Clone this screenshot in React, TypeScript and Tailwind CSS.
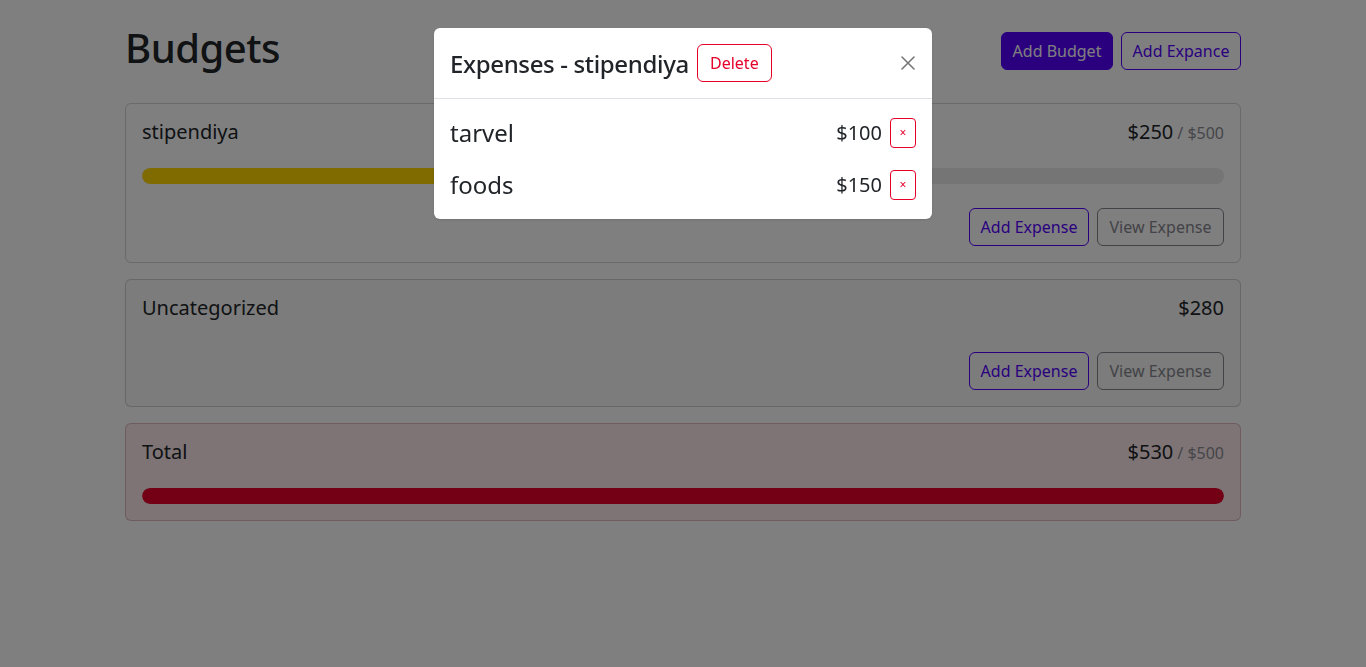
import React from "react";

function Btn({ kind, w, children }: { kind: "primary" | "outline" | "secondary" | "danger"; w: string; children: React.ReactNode }) {
  const base = "h-[38px] flex items-center justify-center rounded-md border text-[16px] leading-[24px] whitespace-nowrap";
  const cls =
    kind === "primary"
      ? "bg-[#5400ff] border-[#5400ff] text-white"
      : kind === "outline"
      ? "border-[#5400ff] text-[#5400ff] bg-transparent"
      : kind === "secondary"
      ? "border-[#85858e] text-[#85858e] bg-transparent"
      : "border-[#e6002a] text-[#e6002a] bg-transparent";
  return <button className={`${base} ${cls} ${w}`}>{children}</button>;
}

function Bar({ pct, color }: { pct: number; color: string }) {
  return (
    <div className="h-4 w-full rounded-full bg-[#eaeaec] overflow-hidden">
      <div className={`h-full rounded-full ${color}`} style={{ width: `${Math.min(pct, 100)}%` }} />
    </div>
  );
}

export default function App() {
  return (
    <div className="relative min-h-screen bg-white text-[#212529] font-['Noto_Sans',sans-serif]">
      <div className="mx-auto w-[1140px] px-3 pt-6">
        <div className="flex items-start gap-2 h-[48px] mb-[31px]">
          <h1 className="mr-auto text-[40px] leading-[48px] font-medium tracking-[-0.5px]">Budgets</h1>
          <div className="mt-2 flex gap-2">
            <Btn kind="primary" w="w-[112px]">Add Budget</Btn>
            <Btn kind="outline" w="w-[120px]">Add Expance</Btn>
          </div>
        </div>

        <div className="flex flex-col gap-[16px]">
          <div className="rounded-md border border-black/[0.17] p-4">
            <div className="flex items-baseline justify-between h-[24px] mb-6">
              <div className="text-[20px] leading-[24px]">stipendiya</div>
              <div className="flex items-baseline">
                <span className="text-[20px] leading-[24px]">$250</span>
                <span className="ml-1 text-[16px] text-[#8c8c94]">/ $500</span>
              </div>
            </div>
            <Bar pct={50} color="bg-[#ffd600]" />
            <div className="mt-6 flex justify-end gap-2">
              <Btn kind="outline" w="w-[120px]">Add Expense</Btn>
              <Btn kind="secondary" w="w-[127px]">View Expense</Btn>
            </div>
          </div>

          <div className="rounded-md border border-black/[0.17] bg-[#f7f8f7] p-4">
            <div className="flex items-baseline justify-between h-[24px] mb-8">
              <div className="text-[20px] leading-[24px]">Uncategorized</div>
              <div className="text-[20px] leading-[24px]">$280</div>
            </div>
            <div className="flex justify-end gap-2">
              <Btn kind="outline" w="w-[120px]">Add Expense</Btn>
              <Btn kind="secondary" w="w-[127px]">View Expense</Btn>
            </div>
          </div>

          <div className="rounded-md border border-[#c89aa2]/60 bg-[#fce8eb] p-4">
            <div className="flex items-baseline justify-between h-[24px] mb-6">
              <div className="text-[20px] leading-[24px]">Total</div>
              <div className="flex items-baseline">
                <span className="text-[20px] leading-[24px]">$530</span>
                <span className="ml-1 text-[16px] text-[#8c8c94]">/ $500</span>
              </div>
            </div>
            <Bar pct={106} color="bg-[#e6002a]" />
          </div>
        </div>
      </div>

      <div className="fixed inset-0 bg-black/50" />

      <div className="fixed inset-0 flex justify-center items-start pt-[28px]">
        <div className="w-[498px] rounded-md bg-white shadow-sm">
          <div className="flex items-center h-[71px] px-4 border-b border-[#dee2e6]">
            <div className="text-[24px] leading-[29px] font-medium tracking-[-0.35px]">Expenses - stipendiya</div>
            <div className="ml-2">
              <Btn kind="danger" w="w-[75px]">Delete</Btn>
            </div>
            <button className="ml-auto w-4 h-4 flex items-center justify-center">
              <svg width="16" height="16" viewBox="0 0 16 16" fill="none" stroke="#777" strokeWidth="1.6" strokeLinecap="round">
                <path d="M2 2L14 14M14 2L2 14" />
              </svg>
            </button>
          </div>
          <div className="p-4 flex flex-col gap-4">
            {[
              ["tarvel", "$100"],
              ["foods", "$150"],
            ].map(([n, a]) => (
              <div key={n} className="flex items-center h-[36px]">
                <div className="text-[24px] leading-[36px]">{n}</div>
                <div className="ml-auto text-[20px] leading-[24px]">{a}</div>
                <button className="ml-2 w-[26px] h-[30px] rounded border border-[#e6002a] text-[#e6002a] text-[12px] flex items-center justify-center">
                  ×
                </button>
              </div>
            ))}
          </div>
        </div>
      </div>
    </div>
  );
}
